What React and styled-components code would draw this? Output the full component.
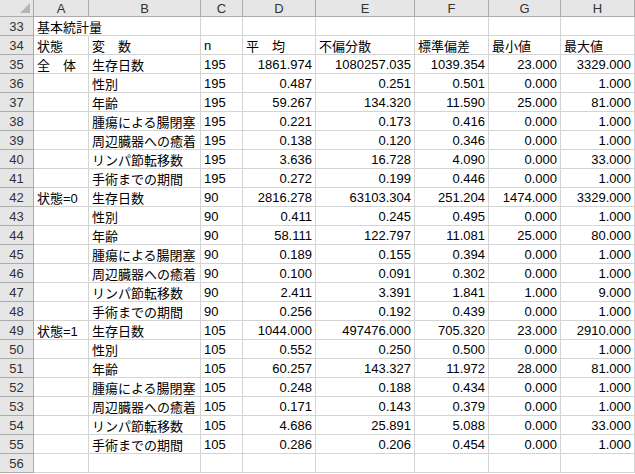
import React from "react";
import styled, { createGlobalStyle } from "styled-components";

const Global = createGlobalStyle`
  html, body { margin: 0; padding: 0; background: #fff; }
  body { font-family: "Liberation Sans", "Noto Sans CJK JP", sans-serif; }
`;

const COLS = [34, 55, 112, 42, 73, 99, 74, 72, 74];

const Sheet = styled.div`
  display: grid;
  grid-template-columns: ${COLS.map((c) => c + "px").join(" ")};
  grid-template-rows: 17px;
  grid-auto-rows: 19px;
  width: 635px;
  font-size: 13px;
  color: #000;
`;

const Corner = styled.div`
  background: #e6e6e6;
  border-right: 1px solid #ababab;
  border-bottom: 1px solid #ababab;
  position: relative;
  &::after {
    content: "";
    position: absolute;
    right: 3px;
    bottom: 3px;
    border-left: 10px solid transparent;
    border-bottom: 10px solid #b4b4b4;
  }
`;

const ColHead = styled.div`
  background: #e6e6e6;
  border-right: 1px solid #ababab;
  border-bottom: 1px solid #ababab;
  display: flex;
  align-items: center;
  justify-content: center;
  color: #333;
  font-size: 13px;
`;

const RowHead = styled.div`
  background: #e6e6e6;
  border-right: 1px solid #ababab;
  border-bottom: 1px solid #ababab;
  display: flex;
  align-items: center;
  justify-content: center;
  color: #333;
`;

const Cell = styled.div`
  border-right: 1px solid #d4d4d4;
  border-bottom: 1px solid #d4d4d4;
  display: flex;
  align-items: center;
  justify-content: ${(p) => (p.$num ? "flex-end" : "flex-start")};
  padding: 0 3px;
  white-space: nowrap;
  overflow: visible;
  ${(p) => (p.$noRight ? "border-right-color: transparent;" : "")}
`;

const vars = ["生存日数", "性別", "年齢", "腫瘍による腸閉塞", "周辺臓器への癒着", "リンパ節転移数", "手術までの期間"];
const data = {
  "全　体": ["195", [
    ["1861.974", "1080257.035", "1039.354", "23.000", "3329.000"],
    ["0.487", "0.251", "0.501", "0.000", "1.000"],
    ["59.267", "134.320", "11.590", "25.000", "81.000"],
    ["0.221", "0.173", "0.416", "0.000", "1.000"],
    ["0.138", "0.120", "0.346", "0.000", "1.000"],
    ["3.636", "16.728", "4.090", "0.000", "33.000"],
    ["0.272", "0.199", "0.446", "0.000", "1.000"],
  ]],
  "状態=0": ["90", [
    ["2816.278", "63103.304", "251.204", "1474.000", "3329.000"],
    ["0.411", "0.245", "0.495", "0.000", "1.000"],
    ["58.111", "122.797", "11.081", "25.000", "80.000"],
    ["0.189", "0.155", "0.394", "0.000", "1.000"],
    ["0.100", "0.091", "0.302", "0.000", "1.000"],
    ["2.411", "3.391", "1.841", "1.000", "9.000"],
    ["0.256", "0.192", "0.439", "0.000", "1.000"],
  ]],
  "状態=1": ["105", [
    ["1044.000", "497476.000", "705.320", "23.000", "2910.000"],
    ["0.552", "0.250", "0.500", "0.000", "1.000"],
    ["60.257", "143.327", "11.972", "28.000", "81.000"],
    ["0.248", "0.188", "0.434", "0.000", "1.000"],
    ["0.171", "0.143", "0.379", "0.000", "1.000"],
    ["4.686", "25.891", "5.088", "0.000", "33.000"],
    ["0.286", "0.206", "0.454", "0.000", "1.000"],
  ]],
};

const rows = [];
rows.push(["基本統計量", "", "", "", "", "", "", ""]);
rows.push(["状態", "変　数", "n", "平　均", "不偏分散", "標準偏差", "最小値", "最大値"]);
Object.entries(data).forEach(([g, [n, vals]]) => {
  vals.forEach((v, i) => rows.push([i === 0 ? g : "", vars[i], n, ...v]));
});
rows.push(["", "", "", "", "", "", "", ""]);

export default function App() {
  return (
    <>
      <Global />
      <Sheet>
        <Corner />
        {["A", "B", "C", "D", "E", "F", "G", "H"].map((c) => (
          <ColHead key={c}>{c}</ColHead>
        ))}
        {rows.map((r, ri) => (
          <React.Fragment key={ri}>
            <RowHead>{33 + ri}</RowHead>
            {r.map((v, ci) => (
              <Cell
                key={ci}
                $num={ri >= 2 && ci >= 3}
                $noRight={ri === 0 && ci === 0}
              >
                {v}
              </Cell>
            ))}
          </React.Fragment>
        ))}
      </Sheet>
    </>
  );
}
